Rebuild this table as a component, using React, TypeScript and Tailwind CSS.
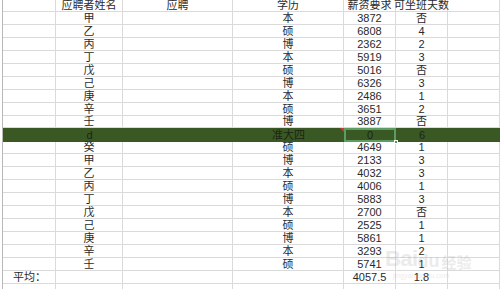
import React from "react";

const top: string[][] = [
  ["甲", "本", "3872", "否"],
  ["乙", "硕", "6808", "4"],
  ["丙", "博", "2362", "2"],
  ["丁", "本", "5919", "3"],
  ["戊", "硕", "5016", "否"],
  ["己", "博", "6326", "3"],
  ["庚", "本", "2486", "1"],
  ["辛", "硕", "3651", "2"],
  ["壬", "博", "3887", "否"],
];
const bottom: string[][] = [
  ["癸", "硕", "4649", "1"],
  ["甲", "博", "2133", "3"],
  ["乙", "本", "4032", "3"],
  ["丙", "硕", "4006", "1"],
  ["丁", "博", "5883", "3"],
  ["戊", "本", "2700", "否"],
  ["己", "硕", "2525", "1"],
  ["庚", "博", "5861", "1"],
  ["辛", "本", "3293", "2"],
  ["壬", "硕", "5741", "1"],
];

const cols = "grid grid-cols-[53px_67px_110px_111px_52px_52px_1fr]";
const cell = "flex items-center justify-center border-r border-b border-[#dadada] leading-none whitespace-nowrap";

function Row({ c, h }: { c: (string | React.ReactNode)[]; h: string }) {
  return (
    <div className={`${cols} ${h}`}>
      {c.map((v, i) => (
        <div key={i} className={`${cell} ${i === 0 ? "justify-start pl-[10px]" : ""}`}>
          {v}
        </div>
      ))}
    </div>
  );
}

export default function App() {
  return (
    <div
      className="relative w-[500px] h-[289px] overflow-hidden bg-white text-[11px] text-[#2a2a2a]"
      style={{ fontFamily: '"Liberation Sans", "Noto Sans CJK SC", sans-serif' }}
    >
      <div className="ml-[2px] border-l border-[#b8b8b8]">
        <Row h="h-[12px]" c={["", "应聘者姓名", "应聘", "学历", "薪资要求", "可坐班天数", ""]} />
        {top.map((r, i) => (
          <Row key={i} h={i === 8 ? "h-[12px]" : "h-[13px]"} c={["", r[0], "", r[1], r[2], r[3], ""]} />
        ))}
        <div className={`${cols} h-[14px] bg-[#3a5824] text-[#1c2612]`}>
          <div className="flex items-center justify-center leading-none"></div>
          <div className="flex items-center justify-center leading-none">d</div>
          <div className="flex items-center justify-center leading-none"></div>
          <div className="relative flex items-center justify-center leading-none">
            准大四
            <span className="absolute right-0 top-0 h-0 w-0 border-t-[4px] border-l-[4px] border-t-[#d33] border-l-transparent" />
          </div>
          <div className="relative flex items-center justify-center leading-none">
            0
            <span className="absolute inset-0 border-2 border-[#5c9d62]" />
            <span className="absolute -right-[2px] -bottom-[2px] h-[4px] w-[4px] bg-[#4c9a56] border border-white" />
          </div>
          <div className="flex items-center justify-center leading-none">6</div>
          <div></div>
        </div>
        {bottom.map((r, i) => (
          <Row key={i} h={i === 0 ? "h-[12px]" : "h-[13px]"} c={["", r[0], "", r[1], r[2], r[3], ""]} />
        ))}
        <Row h="h-[13px]" c={["平均：", "", "", "", "4057.5", "1.8", ""]} />
        <Row h="h-[13px]" c={["", "", "", "", "", "", ""]} />
      </div>
      <div className="pointer-events-none absolute left-[385px] top-[248px] flex flex-col items-start opacity-20 text-[#a0a0a0]">
        <div className="flex items-end leading-none">
          <span className="text-[22px] font-bold tracking-tight" style={{ fontFamily: '"Liberation Sans", sans-serif' }}>Bai</span>
          <span className="text-[18px] font-bold">du</span>
          <span className="ml-[2px] text-[15px] font-bold">经验</span>
        </div>
        <span className="text-[7px] leading-none ml-[8px] mt-[2px]">jingyan.baidu.com</span>
      </div>
    </div>
  );
}
